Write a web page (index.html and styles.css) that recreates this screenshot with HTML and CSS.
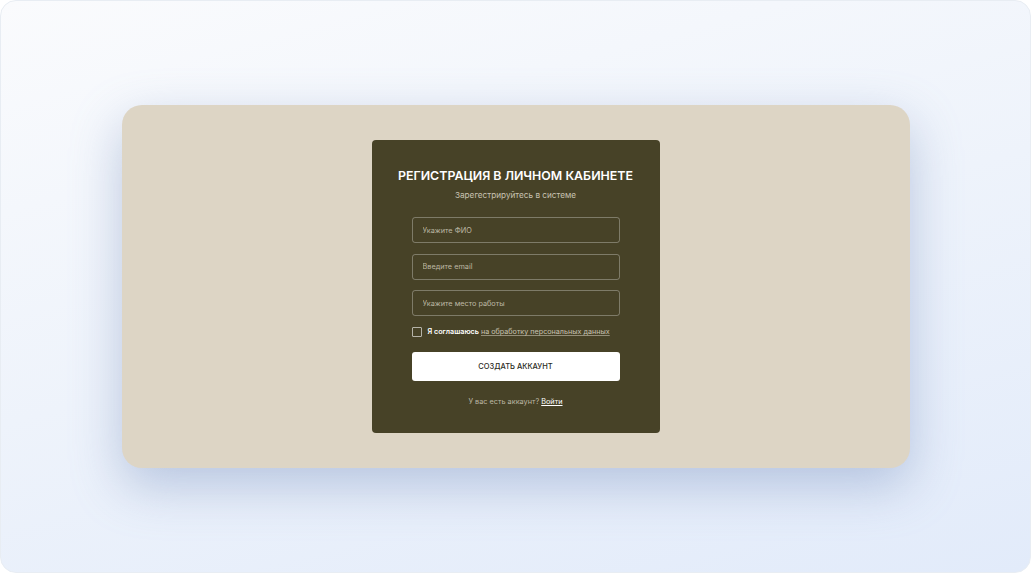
FILE: index.html
```html
<!DOCTYPE html>
<html lang="ru">
<head>
    <meta charset="UTF-8">
    <title>Регистрация</title>
    <link rel="stylesheet" href="styles.css">
</head>
<body>
    <div class="frame">
        <div class="panel">
            <div class="card">
                <h2>Регистрация в личном кабинете</h2>
                <p class="subtitle">Зарегестрируйтесь в системе</p>
                <form>
                    <input type="text" name="name" placeholder="Укажите ФИО">
                    <input type="email" name="email" placeholder="Введите email">
                    <input type="text" name="work" placeholder="Укажите место работы">

                    <label class="agree">
                        <span class="box"></span>
                        <span><b>Я соглашаюсь</b> <a href="#">на обработку персональных данных</a></span>
                    </label>

                    <button type="submit">Создать аккаунт</button>
                </form>
                <p class="login">У вас есть аккаунт? <a href="#">Войти</a></p>
            </div>
        </div>
    </div>
</body>
</html>
```

FILE: styles.css
```css
* {
    box-sizing: border-box;
}
html, body {
    height: 100%;
}
body {
    margin: 0;
    font-family: Inter, "Noto Sans", Arial, sans-serif;
    background: #fff;
}
.frame {
    height: 100%;
    border: 1px solid #e8edf3;
    border-radius: 16px;
    background: linear-gradient(165deg, #fafbfd 0%, #eef3fb 50%, #e2ebfa 100%);
    display: flex;
    align-items: center;
    justify-content: center;
}
.panel {
    width: 788px;
    height: 363px;
    background: #ddd5c5;
    border-radius: 20px;
    box-shadow: 0 18px 50px rgba(120, 145, 190, 0.45);
    display: flex;
    align-items: center;
    justify-content: center;
}
.card {
    width: 288px;
    height: 293px;
    background: #474227;
    border-radius: 4px;
    padding: 28px 40px 0 40px;
    text-align: center;
}
h2 {
    margin: 0 -30px;
    color: #fff;
    font-size: 12.4px;
    font-weight: 600;
    text-transform: uppercase;
    white-space: nowrap;
    line-height: 16px;
}
.subtitle {
    margin: 5px 0 0 0;
    color: #c8c3b2;
    font-size: 8.2px;
    line-height: 12px;
}
form {
    margin-top: 16px;
    display: flex;
    flex-direction: column;
}
input {
    width: 100%;
    height: 26px;
    margin-bottom: 10.5px;
    padding: 0 10px;
    background: transparent;
    border: 1px solid rgba(255, 255, 255, 0.3);
    border-radius: 3px;
    font-family: inherit;
    font-size: 7.3px;
    color: #fff;
}
input::placeholder {
    color: #bdb8a5;
}
.agree {
    display: flex;
    align-items: center;
    gap: 6px;
    font-size: 7.2px;
    color: #fff;
    text-align: left;
    white-space: nowrap;
}
.box {
    flex: none;
    width: 10px;
    height: 10px;
    border: 1px solid rgba(255, 255, 255, 0.6);
    border-radius: 1px;
}
.agree b {
    font-weight: 600;
}
.agree a {
    color: #c8c3b2;
    text-decoration: underline;
    text-decoration-color: rgba(200, 195, 178, 0.6);
}
button {
    margin-top: 15px;
    height: 29px;
    background: #fff;
    border: none;
    border-radius: 3px;
    font-family: inherit;
    font-size: 7.5px;
    font-weight: 500;
    text-transform: uppercase;
    color: #2a2a22;
    cursor: pointer;
}
.login {
    margin: 16px 0 0 0;
    font-size: 7.3px;
    color: #bdb8a5;
}
.login a {
    color: #fff;
    text-decoration: underline;
}
```
